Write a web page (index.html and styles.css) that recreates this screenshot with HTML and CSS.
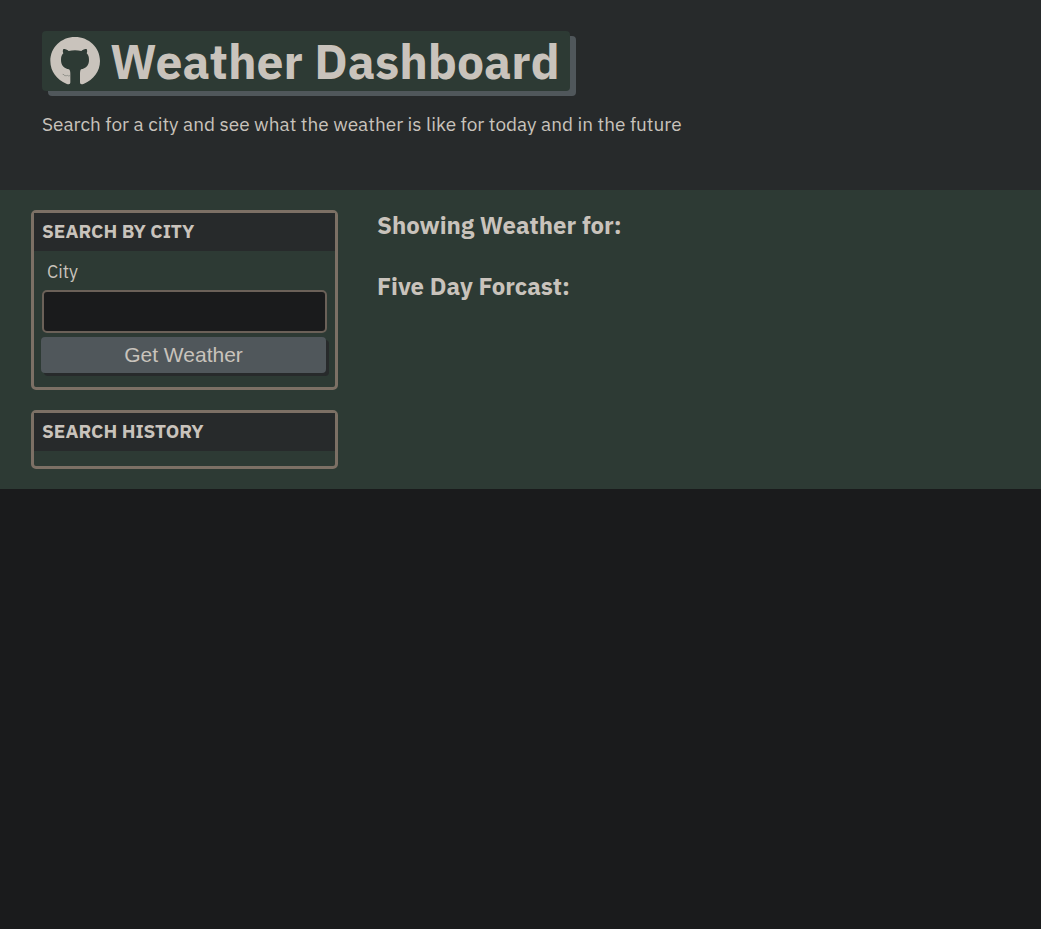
FILE: index.html
```html
<!DOCTYPE html>
<html lang="en">
<head>
<meta charset="utf-8">
<meta name="viewport" content="width=device-width, initial-scale=1">
<title>Weather Dashboard</title>
<link rel="stylesheet" href="styles.css">
</head>
<body>
<header class="hero">
  <h1 class="title">
    <svg class="logo" viewBox="30 26 150 147" aria-hidden="true">
      <path fill="currentColor" d="M105 26C63 26 31 58 31 98c0 31 20 57 48 68 8 3 12 2 12-4v-26c0-6-1-10-4-13C73 120 63 112 63 95c0-9 2-15 7-20-2-5-2-8 0-13 6 0 11 2 16 6 12-3 26-3 38 0 5-4 10-6 16-6 2 5 2 8 0 13 5 5 7 11 7 20 0 17-10 25-24 28-2 3-3 7-3 13v26c0 6 4 7 12 4 28-11 48-37 48-68 0-40-33-72-75-72z"/>
      <path fill="none" stroke="#2d3a34" stroke-width="1" d="M68 138l4 1 2 3h6l2-1 2 2 6-1"/>
    </svg>
    <span>Weather Dashboard</span>
  </h1>
  <p class="lead">Search for a city and see what the weather is like for today and in the future</p>
</header>
<main class="main">
  <aside class="sidebar">
    <section class="card">
      <h2 class="card-title">Search by City</h2>
      <form class="form">
        <label class="label" for="city">City</label>
        <input class="input" id="city" type="text">
        <button class="button" type="submit">Get Weather</button>
      </form>
    </section>
    <section class="card">
      <h2 class="card-title">Search History</h2>
      <div class="history"></div>
    </section>
  </aside>
  <div class="results">
    <h2 class="heading">Showing Weather for:</h2>
    <h2 class="heading">Five Day Forcast:</h2>
  </div>
</main>
</body>
</html>
```
FILE: styles.css
```css
* {
  box-sizing: border-box;
}

body {
  margin: 0;
  background: #1a1b1c;
  color: #c9c3bc;
  font-family: "IBM Plex Sans", "Noto Sans", sans-serif;
  font-size: 18px;
}

h1, h2, p {
  margin: 0;
}

.hero {
  padding: 31px 42px 52px;
  background: #272a2b;
}

.title {
  display: inline-flex;
  align-items: center;
  gap: 10px;
  padding: 0 10px 0 8px;
  border-radius: 4px;
  background: #2d3a34;
  box-shadow: 6px 5px 0 #50575b;
  font-size: 48px;
  line-height: 60px;
}

.logo {
  flex: none;
  width: 50px;
  height: 49px;
}

.lead {
  margin-top: 20px;
  font-size: 19px;
  line-height: 27px;
}

.main {
  display: flex;
  gap: 39px;
  padding: 20px 31px;
  background: #2d3a34;
}

.sidebar {
  display: flex;
  flex: 0 0 307px;
  flex-direction: column;
  gap: 20px;
}

.card {
  border: 3px solid #7c7065;
  border-radius: 5px;
}

.card-title {
  padding: 5px 8px 6px;
  background: #272a2b;
  font-size: 19px;
  line-height: 27px;
  text-transform: uppercase;
}

.form {
  display: flex;
  flex-direction: column;
  padding: 7px 8px 14px;
}

.label {
  padding: 0 5px;
  line-height: 27px;
}

.input {
  height: 43px;
  margin-top: 5px;
  padding: 0 8px;
  border: 2px solid #6b6158;
  border-radius: 5px;
  background: #1a1b1c;
  color: inherit;
  font: inherit;
}

.button {
  height: 36px;
  margin: 4px 1px 0 -1px;
  padding: 0;
  border: 0;
  border-radius: 4px;
  background: #50575b;
  box-shadow: 3px 3px 0 #272a2b;
  color: inherit;
  font-family: "Liberation Sans", Arial, sans-serif;
  font-size: 21px;
}

.history {
  padding-top: 15px;
}

.results {
  display: flex;
  flex: 1;
  flex-direction: column;
  gap: 30px;
}

.heading {
  font-size: 24px;
  line-height: 31px;
}
```
